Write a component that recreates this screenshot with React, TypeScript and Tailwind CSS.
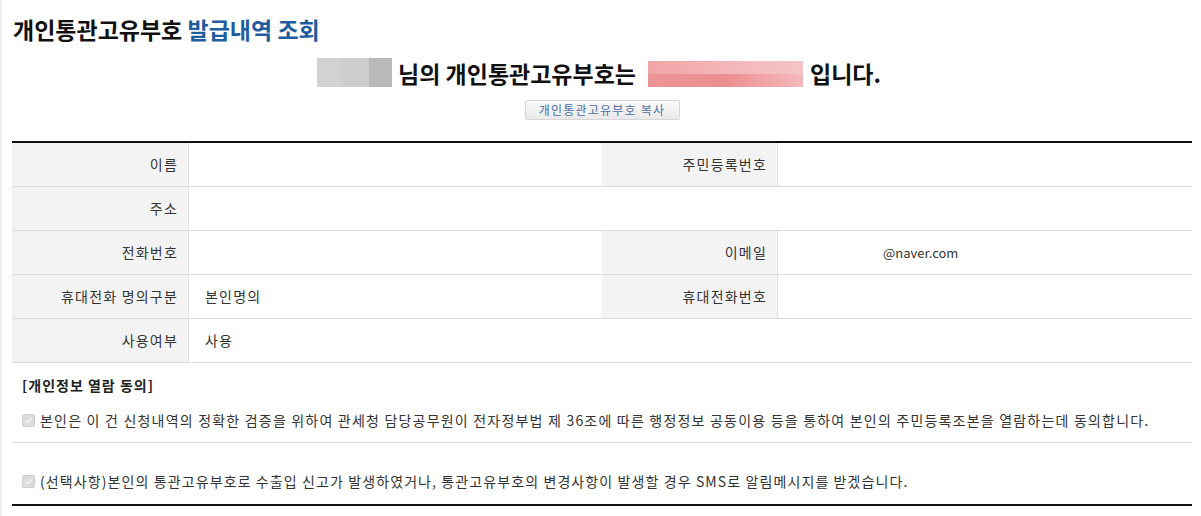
const font = { fontFamily: '"Noto Sans CJK KR", "Malgun Gothic", sans-serif' };

type Cell = { label: string; value?: string; span?: boolean };

const rows: Cell[][] = [
  [{ label: "이름" }, { label: "주민등록번호" }],
  [{ label: "주소", span: true }],
  [{ label: "전화번호" }, { label: "이메일", value: "@naver.com" }],
  [{ label: "휴대전화 명의구분", value: "본인명의" }, { label: "휴대전화번호" }],
  [{ label: "사용여부", value: "사용", span: true }],
];

const Label = ({ text }: { text: string }) => (
  <div className="flex items-center justify-end bg-[#f3f3f3] pr-[10px] border-r border-[#e2e2e2] text-[14px] tracking-[1.2px] text-[#333]">
    {text}
  </div>
);

const Check = () => (
  <span className="inline-flex items-center justify-center w-[13px] h-[13px] rounded-[2px] bg-[#dcdcdc] border border-[#cfcfcf] mr-[5px] shrink-0">
    <svg viewBox="0 0 12 12" className="w-[9px] h-[9px]">
      <path d="M2 6.2 L4.8 9 L10 3" fill="none" stroke="#f4f4f4" strokeWidth="1.8" />
    </svg>
  </span>
);

export default function App() {
  return (
    <div className="min-h-[516px] bg-white border-l-2 border-[#f0f0f0]" style={font}>
      <div className="pl-[10px] w-[1190px]">
        <h1 className="pl-[1px] pt-[12px] text-[23px] font-bold leading-[34px] text-[#111]">
          개인통관고유부호 <span className="text-[#1f5c9e]">발급내역 조회</span>
        </h1>

        <div className="mt-[12px] pr-[6px] flex items-center justify-center h-[30px] text-[23px] font-bold text-[#111]">
          <span className="flex h-[29px] w-[75px] mr-[6px] -mt-[2px]">
            <span className="w-[24px] bg-[#d2d2d2]" />
            <span className="w-[28px] bg-[#cdcdcd]" />
            <span className="w-[23px] bg-[#b9b9b9]" />
          </span>
          님의 개인통관고유부호는
          <span className="flex flex-col h-[26px] w-[155px] ml-[12px] mr-[7px] mt-[2px]">
            <span className="h-[13px] bg-gradient-to-r from-[#f0a4a6] via-[#f4b6b8] to-[#f3c4c6]" />
            <span className="h-[13px] bg-gradient-to-r from-[#eb9496] via-[#ec8f92] to-[#f4b9bb]" />
          </span>
          입니다.
        </div>

        <div className="flex justify-center mt-[12px]">
          <button className="h-[20px] w-[155px] border border-[#d6d6d6] rounded-[2px] bg-gradient-to-b from-[#fafafa] to-[#e9e9e9] text-[12px] tracking-[1.2px] text-[#4d6ea3] leading-none">
            개인통관고유부호 복사
          </button>
        </div>

        <div className="mt-[21px] border-t-2 border-[#111]">
          {rows.map((row, i) => (
            <div key={i} className="grid grid-cols-[177px_413px_176px_1fr] h-[44px] border-b border-[#dcdcdc]">
              {row.map((c) => (
                <>
                  <Label key={c.label} text={c.label} />
                  <div
                    className={`flex items-center text-[#333] ${c.span ? "col-span-3" : ""} ${
                      c.value === "@naver.com" ? "pl-[105px] text-[13px]" : "pl-[16px] text-[14px] tracking-[1.2px]"
                    }`}
                  >
                    {c.value}
                  </div>
                </>
              ))}
            </div>
          ))}

          <div className="flex items-center pl-[10px] pt-[10px] h-[34px] text-[14px] tracking-[1px] font-bold text-[#222]">
            [개인정보 열람 동의]
          </div>
          <div className="flex items-center pl-[10px] h-[46px] pt-[2px] border-b border-[#dcdcdc] text-[14px] tracking-[1.2px] text-[#333]">
            <Check />
            본인은 이 건 신청내역의 정확한 검증을 위하여 관세청 담당공무원이 전자정부법 제 36조에 따른 행정정보 공동이용 등을 통하여 본인의 주민등록조본을 열람하는데 동의합니다.
          </div>
          <div className="flex items-center pl-[10px] h-[63px] pt-[15px] border-b-2 border-[#111] text-[14px] tracking-[1.1px] text-[#333]">
            <Check />
            (선택사항)본인의 통관고유부호로 수출입 신고가 발생하였거나, 통관고유부호의 변경사항이 발생할 경우 SMS로 알림메시지를 받겠습니다.
          </div>
        </div>
      </div>
    </div>
  );
}
